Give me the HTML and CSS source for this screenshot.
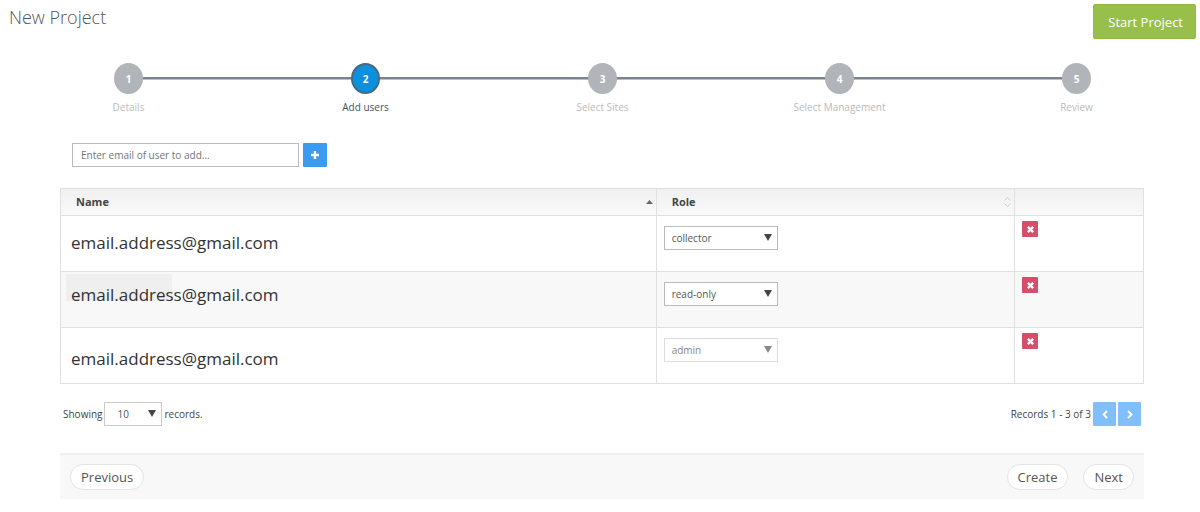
FILE: index.html
```html
<!DOCTYPE html>
<html lang="en">
<head>
<meta charset="utf-8">
<title>New Project</title>
<link rel="stylesheet" href="styles.css">
</head>
<body>
<header class="page-header">
  <h1 class="page-title">New Project</h1>
  <button class="start-button" type="button">Start Project</button>
</header>

<ol class="steps">
  <li class="step"><span class="step-number">1</span><span class="step-label">Details</span></li>
  <li class="step step-active" aria-current="step"><span class="step-number">2</span><span class="step-label">Add users</span></li>
  <li class="step"><span class="step-number">3</span><span class="step-label">Select Sites</span></li>
  <li class="step"><span class="step-number">4</span><span class="step-label">Select Management</span></li>
  <li class="step"><span class="step-number">5</span><span class="step-label">Review</span></li>
</ol>

<main class="content">
  <form class="add-user">
    <input class="email-input" type="email" aria-label="Email of user to add" placeholder="Enter email of user to add...">
    <button class="icon-button" type="button" aria-label="Add user">
      <svg width="8" height="8" viewBox="0 0 8 8"><path d="M4 0v8M0 4h8" stroke="#fff" stroke-width="2.4"/></svg>
    </button>
  </form>

  <table class="users">
    <colgroup><col class="col-name"><col class="col-role"><col class="col-action"></colgroup>
    <thead>
      <tr>
        <th scope="col"><div class="heading">Name<svg width="7" height="4" viewBox="0 0 7 4"><path d="M0 4L3.5 0L7 4z" fill="#666"/></svg></div></th>
        <th scope="col"><div class="heading">Role<svg width="7" height="10" viewBox="0 0 7 10"><path d="M.5 3.5L3.5 .5L6.5 3.5M.5 6.5L3.5 9.5L6.5 6.5" fill="none" stroke="#ccc"/></svg></div></th>
        <td></td>
      </tr>
    </thead>
    <tbody>
      <tr>
        <td class="email">email.address@gmail.com</td>
        <td><span class="select role-select"><select aria-label="Role of user 1"><option selected>collector</option><option>read-only</option><option>admin</option></select></span></td>
        <td><button class="remove-button" type="button" aria-label="Remove user 1"><svg width="7" height="7" viewBox="0 0 8 8"><path d="M1 1l6 6M7 1l-6 6" stroke="#fff" stroke-width="2.8"/></svg></button></td>
      </tr>
      <tr class="row-alt">
        <td class="email email-top email-marked"><span class="email-text">email.address@gmail.com</span></td>
        <td><span class="select role-select"><select aria-label="Role of user 2"><option>collector</option><option selected>read-only</option><option>admin</option></select></span></td>
        <td><button class="remove-button" type="button" aria-label="Remove user 2"><svg width="7" height="7" viewBox="0 0 8 8"><path d="M1 1l6 6M7 1l-6 6" stroke="#fff" stroke-width="2.8"/></svg></button></td>
      </tr>
      <tr>
        <td class="email email-bottom">email.address@gmail.com</td>
        <td><span class="select role-select select-disabled"><select aria-label="Role of user 3" disabled><option>collector</option><option>read-only</option><option selected>admin</option></select></span></td>
        <td><button class="remove-button" type="button" aria-label="Remove user 3"><svg width="7" height="7" viewBox="0 0 8 8"><path d="M1 1l6 6M7 1l-6 6" stroke="#fff" stroke-width="2.8"/></svg></button></td>
      </tr>
    </tbody>
  </table>

  <div class="paging">
    <div class="page-size">
      <label for="page-size">Showing</label>
      <span class="select size-select"><select id="page-size"><option>10</option><option>25</option><option>50</option></select></span>
      <span>records.</span>
    </div>
    <div class="page-nav">
      <span>Records 1 - 3 of 3</span>
      <button class="icon-button" type="button" aria-label="Previous page" disabled><svg width="6" height="9" viewBox="0 0 6 9"><path d="M5 1L1.6 4.5L5 8" fill="none" stroke="#fff" stroke-width="2"/></svg></button>
      <button class="icon-button" type="button" aria-label="Next page" disabled><svg width="6" height="9" viewBox="0 0 6 9"><path d="M1 1l3.4 3.5L1 8" fill="none" stroke="#fff" stroke-width="2"/></svg></button>
    </div>
  </div>

  <footer class="actions">
    <button class="pill" type="button">Previous</button>
    <div class="actions-end">
      <button class="pill" type="button">Create</button>
      <button class="pill" type="button">Next</button>
    </div>
  </footer>
</main>
</body>
</html>
```
FILE: styles.css
```css
* { box-sizing: border-box; }

body {
  margin: 0;
  background: #fff;
  color: #555;
  font: 10px/16px "Open Sans", "Noto Sans", sans-serif;
}

button, input, select { font: inherit; color: inherit; }
button { cursor: pointer; }
svg { display: block; }

.page-header {
  display: flex;
  justify-content: space-between;
  align-items: flex-start;
  padding: 4px 4px 0 9px;
}

.page-title {
  margin: 0;
  font-size: 18px;
  font-weight: 300;
  line-height: 26px;
}

.start-button {
  height: 35px;
  padding: 0 12px 0 14px;
  border: 1px solid #8fbb40;
  border-radius: 2px;
  background: #97bf4a;
  color: #fff;
  font-size: 13px;
}

.steps {
  display: flex;
  margin: 24px 5px 0 10px;
  padding: 0;
  list-style: none;
}

.step {
  position: relative;
  flex: 1;
  display: flex;
  flex-direction: column;
  align-items: center;
  gap: 5px;
  color: #bbb;
}

.step + .step::before {
  content: "";
  position: absolute;
  z-index: -1;
  top: 14px;
  left: -50%;
  width: 100%;
  height: 2px;
  background: #7a838f;
  border-bottom: 1px solid #b9bec4;
}

.step-number {
  display: flex;
  align-items: center;
  justify-content: center;
  width: 29px;
  height: 31px;
  border-radius: 50%;
  background: #b1b4b8;
  color: #fff;
  font-weight: 700;
}

.step-active { color: #44535f; }
.step-active .step-number {
  border: 2px solid #476a84;
  background: #0a90dc;
}

.content { margin: 28px 56px 0 60px; }

.add-user {
  display: flex;
  gap: 4px;
  margin-left: 12px;
}

.email-input {
  width: 227px;
  height: 24px;
  padding: 0 8px;
  border: 1px solid #bbb;
  background: #fff;
}
.email-input::placeholder { color: #757575; opacity: 1; }

.icon-button {
  display: flex;
  align-items: center;
  justify-content: center;
  width: 24px;
  height: 24px;
  padding: 0;
  border: 0;
  border-radius: 1px;
  background: #3a9bf0;
}
.icon-button:disabled {
  width: 23px;
  background: #80bffb;
  cursor: default;
}

.users {
  width: 100%;
  margin-top: 21px;
  border-collapse: collapse;
  table-layout: fixed;
}
.col-name { width: 55%; }
.col-action { width: 129px; }

.users th, .users td {
  padding: 5px 7px;
  border: 1px solid #e0e0e0;
  text-align: left;
  vertical-align: top;
}
.users thead tr {
  height: 27px;
  background: linear-gradient(#f0f0f0, #fafafa);
}
.users th { padding: 5px 3px 5px 15px; color: #444; }
.heading {
  display: flex;
  align-items: center;
  justify-content: space-between;
  font-size: 11px;
}
.users tbody tr { height: 56px; }
.row-alt { background: #f8f8f8; }

.users .email {
  padding: 11px 10px 12px;
  color: #333;
  font-size: 17px;
  line-height: 24px;
  vertical-align: middle;
}
.users .email-top { vertical-align: top; }
.users .email-bottom { vertical-align: bottom; }

.email-marked { position: relative; }
.email-marked::before {
  content: "";
  position: absolute;
  top: 2px;
  left: 5px;
  width: 106px;
  height: 27px;
  background: #efefef;
}
.email-text { position: relative; }

.select {
  position: relative;
  display: inline-block;
  height: 24px;
}
.select select {
  appearance: none;
  display: block;
  width: 100%;
  height: 100%;
  padding: 0 7px;
  border: 1px solid #bbb;
  border-radius: 0;
  background: #fff;
  color: #555;
  opacity: 1;
}
.select::after {
  content: "";
  position: absolute;
  top: 8px;
  right: 6px;
  border: solid transparent;
  border-width: 7px 4px 0;
  border-top-color: #444;
  pointer-events: none;
}
.role-select { width: 114px; margin-top: 5px; }
.select-disabled select { border-color: #ddd; color: #888; }
.select-disabled::after { border-top-color: #888; }
.size-select { width: 58px; }
.size-select select { padding-left: 12px; border-color: #ccc; }

.remove-button {
  display: flex;
  align-items: center;
  justify-content: center;
  width: 16px;
  height: 16px;
  padding: 0;
  border: 0;
  border-radius: 1px;
  background: #d54e6a;
}

.paging {
  display: flex;
  justify-content: space-between;
  margin-top: 18px;
  padding: 0 3px;
  color: #444;
}
.page-size, .page-nav {
  display: flex;
  align-items: center;
  gap: 2px;
}

.actions {
  display: flex;
  align-items: center;
  justify-content: space-between;
  margin-top: 27px;
  padding: 9px 10px;
  border-top: 2px solid #efefef;
  background: #f8f8f8;
}
.actions-end { display: flex; gap: 15px; }

.pill {
  height: 26px;
  padding: 0 10px;
  border: 1px solid #e4e4e4;
  border-radius: 13px;
  background: #fff;
  font-size: 13px;
}
```
